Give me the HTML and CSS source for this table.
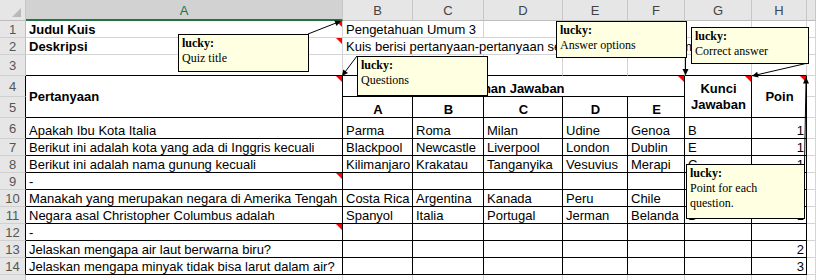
FILE: index.html
```html
<!DOCTYPE html>
<html>
<head>
<meta charset="utf-8">
<link rel="stylesheet" href="styles.css">
</head>
<body>
<div class="sheet">
  <div class="grid">
    <div class="corner"></div>
    <div class="ch sel">A</div><div class="ch">B</div><div class="ch">C</div><div class="ch">D</div><div class="ch">E</div><div class="ch">F</div><div class="ch">G</div><div class="ch">H</div><div class="ch"></div>

    <div class="rh">1</div><div class="c b note">Judul Kuis</div><div class="c s2">Pengetahuan Umum 3</div><div class="c"></div><div class="c"></div><div class="c"></div><div class="c"></div><div class="c"></div><div class="c"></div>

    <div class="rh">2</div><div class="c b note">Deskripsi</div><div class="c s6">Kuis berisi pertanyaan-pertanyaan seputar pengetahuan umum</div><div class="c"></div><div class="c"></div>

    <div class="rh">3</div><div class="c top"></div><div class="c top"></div><div class="c top"></div><div class="c top"></div><div class="c top"></div><div class="c top"></div><div class="c top"></div><div class="c top"></div><div class="c"></div>

    <div class="rh tl">4</div><div class="c t b r2 mid note">Pertanyaan</div><div class="c t b s5 ctr note">Pilihan Jawaban</div><div class="c t b r2 mid ctr wrap note">Kunci Jawaban</div><div class="c t b r2 mid ctr note">Poin</div><div class="c"></div>
    <div class="rh tl">5</div><div class="c t b ctr">A</div><div class="c t b ctr">B</div><div class="c t b ctr">C</div><div class="c t b ctr">D</div><div class="c t b ctr">E</div><div class="c"></div>

    <div class="rh tl">6</div><div class="c t">Apakah Ibu Kota Italia</div><div class="c t">Parma</div><div class="c t">Roma</div><div class="c t">Milan</div><div class="c t">Udine</div><div class="c t">Genoa</div><div class="c t">B</div><div class="c t num">1</div><div class="c"></div>
    <div class="rh tl">7</div><div class="c t">Berikut ini adalah kota yang ada di Inggris kecuali</div><div class="c t">Blackpool</div><div class="c t">Newcastle</div><div class="c t">Liverpool</div><div class="c t">London</div><div class="c t">Dublin</div><div class="c t">E</div><div class="c t num">1</div><div class="c"></div>
    <div class="rh tl">8</div><div class="c t">Berikut ini adalah nama gunung kecuali</div><div class="c t">Kilimanjaro</div><div class="c t">Krakatau</div><div class="c t">Tanganyika</div><div class="c t">Vesuvius</div><div class="c t">Merapi</div><div class="c t">C</div><div class="c t num">1</div><div class="c"></div>
    <div class="rh tl">9</div><div class="c t note">-</div><div class="c t"></div><div class="c t"></div><div class="c t"></div><div class="c t"></div><div class="c t"></div><div class="c t"></div><div class="c t num"></div><div class="c"></div>
    <div class="rh tl">10</div><div class="c t">Manakah yang merupakan negara di Amerika Tengah</div><div class="c t">Costa Rica</div><div class="c t">Argentina</div><div class="c t">Kanada</div><div class="c t">Peru</div><div class="c t">Chile</div><div class="c t">A</div><div class="c t num">1</div><div class="c"></div>
    <div class="rh tl">11</div><div class="c t">Negara asal Christopher Columbus adalah</div><div class="c t">Spanyol</div><div class="c t">Italia</div><div class="c t">Portugal</div><div class="c t">Jerman</div><div class="c t">Belanda</div><div class="c t">B</div><div class="c t num">1</div><div class="c"></div>
    <div class="rh tl">12</div><div class="c t note">-</div><div class="c t"></div><div class="c t"></div><div class="c t"></div><div class="c t"></div><div class="c t"></div><div class="c t"></div><div class="c t num"></div><div class="c"></div>
    <div class="rh tl">13</div><div class="c t">Jelaskan mengapa air laut berwarna biru?</div><div class="c t"></div><div class="c t"></div><div class="c t"></div><div class="c t"></div><div class="c t"></div><div class="c t"></div><div class="c t num">2</div><div class="c"></div>
    <div class="rh tl">14</div><div class="c t">Jelaskan mengapa minyak tidak bisa larut dalam air?</div><div class="c t"></div><div class="c t"></div><div class="c t"></div><div class="c t"></div><div class="c t"></div><div class="c t"></div><div class="c t num">3</div><div class="c"></div>

    <div class="rh"></div><div class="c"></div><div class="c"></div><div class="c"></div><div class="c"></div><div class="c"></div><div class="c"></div><div class="c"></div><div class="c"></div><div class="c"></div>
  </div>

  <svg class="arrows" width="816" height="280" viewBox="0 0 816 280">
    <g stroke="#000" stroke-width="1" fill="none">
      <line x1="308" y1="34" x2="337" y2="22.6"/>
      <line x1="357" y1="56" x2="345" y2="72"/>
      <line x1="685.5" y1="57" x2="685.5" y2="70"/>
      <line x1="808" y1="63" x2="757" y2="74.8"/>
      <line x1="804.5" y1="164" x2="806" y2="82"/>
    </g>
    <g fill="#000">
      <polygon points="341,21 336.5,26 334.3,20.4"/>
      <polygon points="342,76 348,73 343.2,69.4"/>
      <polygon points="685.5,75.5 682.5,69 688.5,69"/>
      <polygon points="752,76 758.5,77.6 757.2,71.7"/>
      <polygon points="806,77 803,83.5 809,83.5"/>
    </g>
  </svg>

  <div class="cm cm-title"><b>lucky:</b>Quiz title</div>
  <div class="cm cm-options"><b>lucky:</b>Answer options</div>
  <div class="cm cm-questions"><b>lucky:</b>Questions</div>
  <div class="cm cm-answer"><b>lucky:</b>Correct answer</div>
  <div class="cm cm-point"><b>lucky:</b>Point for each question.</div>
</div>
</body>
</html>
```

FILE: styles.css
```css
html, body {
  margin: 0;
  padding: 0;
  background: #ffffff;
}
body {
  width: 816px;
  height: 280px;
  overflow: hidden;
}
.sheet {
  position: relative;
  width: 816px;
  height: 280px;
  overflow: hidden;
  font-family: "Liberation Sans", Arial, sans-serif;
  font-size: 13px;
  color: #000;
}
.grid {
  display: grid;
  grid-template-columns: 26px 317px 70px 71px 79px 65px 57px 67px 55px 1fr;
  grid-template-rows: 21px 17px 17px 21px 21px 21px 21px repeat(8, 17px) 17px;
}
.grid > div {
  box-sizing: border-box;
  min-width: 0;
}
.corner {
  position: relative;
  background: #e6e6e6;
  border-right: 1px solid #c6c6c6;
  border-bottom: 1px solid #bdbdbd;
}
.corner::after {
  content: "";
  position: absolute;
  right: 4px;
  bottom: 3px;
  width: 0;
  height: 0;
  border-left: 9px solid transparent;
  border-bottom: 9px solid #b9b9b9;
}
.ch {
  background: #e6e6e6;
  border-right: 1px solid #c6c6c6;
  border-bottom: 1px solid #bdbdbd;
  color: #444;
  display: flex;
  align-items: center;
  justify-content: center;
  font-size: 13px;
  padding-top: 1px;
}
.ch.sel {
  background: #d2d2d2;
  color: #217346;
  border-bottom: 2px solid #217346;
}
.rh {
  background: #e6e6e6;
  border-right: 1px solid #bdbdbd;
  border-bottom: 1px solid #d0d0d0;
  color: #555;
  display: flex;
  align-items: center;
  justify-content: center;
  font-size: 13px;
}
.rh.tl {
  border-right-color: #000;
}
.c {
  border-right: 1px solid #d4d4d4;
  border-bottom: 1px solid #d4d4d4;
  display: flex;
  align-items: flex-end;
  padding: 0 2px 0 3px;
  white-space: nowrap;
  overflow: hidden;
  line-height: 15px;
}
.c.t {
  border-right-color: #000;
  border-bottom-color: #000;
}
.c.top {
  border-bottom-color: #000;
}
.b { font-weight: bold; }
.ctr { justify-content: center; text-align: center; }
.num { justify-content: flex-end; }
.mid { align-items: center; }
.wrap { white-space: normal; line-height: 16px; }
.s2 { grid-column: span 2; }
.s5 { grid-column: span 5; }
.s6 { grid-column: span 6; }
.r2 { grid-row: span 2; }
.note {
  position: relative;
}
.note::after {
  content: "";
  position: absolute;
  top: 0;
  right: 0;
  width: 0;
  height: 0;
  border-top: 6px solid #ff0000;
  border-left: 6px solid transparent;
}
.arrows {
  position: absolute;
  left: 0;
  top: 0;
  pointer-events: none;
}
.cm {
  position: absolute;
  box-sizing: border-box;
  background: #ffffe1;
  border: 1px solid #000;
  padding: 1px 3px;
  font-family: "Liberation Serif", "Times New Roman", serif;
  font-size: 12px;
  line-height: 15px;
  color: #000;
}
.cm b {
  display: block;
}
.cm-title { left: 178px; top: 34px; width: 131px; height: 38px; }
.cm-options { left: 556px; top: 21px; width: 131px; height: 37px; }
.cm-questions { left: 357px; top: 56px; width: 131px; height: 40px; }
.cm-answer { left: 691px; top: 27px; width: 118px; height: 37px; }
.cm-point { left: 686px; top: 164px; width: 119px; height: 55px; }
```
